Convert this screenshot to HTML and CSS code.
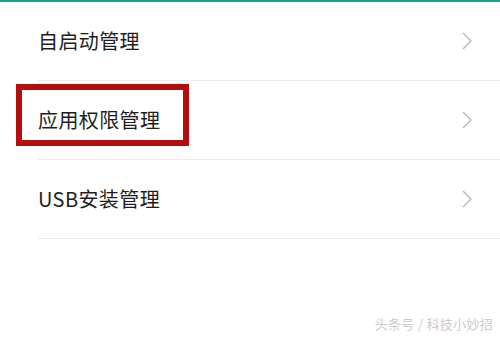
FILE: index.html
```html
<!DOCTYPE html>
<html lang="zh">
<head>
<meta charset="utf-8">
<link rel="stylesheet" href="styles.css">
</head>
<body>
<div class="page">
  <div class="topbar"></div>
  <ul class="list">
    <li class="row"><span class="label">自启动管理</span><svg class="chev" width="10" height="18" viewBox="0 0 10 18"><polyline points="1,1 9,9 1,17" fill="none" stroke="#b4b4b4" stroke-width="1.3"/></svg></li>
    <li class="row"><span class="label">应用权限管理</span><svg class="chev" width="10" height="18" viewBox="0 0 10 18"><polyline points="1,1 9,9 1,17" fill="none" stroke="#b4b4b4" stroke-width="1.3"/></svg></li>
    <li class="row"><span class="label">USB安装管理</span><svg class="chev" width="10" height="18" viewBox="0 0 10 18"><polyline points="1,1 9,9 1,17" fill="none" stroke="#b4b4b4" stroke-width="1.3"/></svg></li>
  </ul>
  <div class="watermark">头条号 / 科技小妙招</div>
  <div class="highlight"></div>
</div>
</body>
</html>
```

FILE: styles.css
```css
html, body {
  margin: 0;
  padding: 0;
  background: #ffffff;
}
.page {
  position: relative;
  width: 500px;
  height: 339px;
  display: flex;
  flex-direction: column;
  font-family: "Noto Sans CJK SC", "Noto Sans", sans-serif;
  overflow: hidden;
}
.topbar {
  height: 2px;
  background: #1b9d8e;
  flex: none;
}
.list {
  list-style: none;
  margin: 0;
  padding: 0 0 0 38px;
}
.row {
  height: 78px;
  border-bottom: 1px solid #ebebeb;
  display: flex;
  align-items: center;
  justify-content: space-between;
  padding-right: 28px;
}
.label {
  font-size: 20px;
  color: #1e1e1e;
  line-height: 1;
  letter-spacing: 0.4px;
}
.chev {
  display: block;
}
.watermark {
  margin-top: auto;
  align-self: flex-end;
  font-size: 13px;
  color: #cbcbcb;
  padding: 0 7px 6px 0;
  letter-spacing: 0.3px;
}
.highlight {
  position: absolute;
  left: 16px;
  top: 84px;
  width: 161px;
  height: 50px;
  border: 6px solid #b30d0d;
}
```
